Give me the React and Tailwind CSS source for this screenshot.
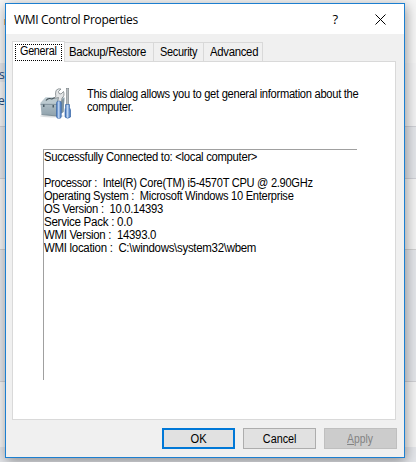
const tabBase = "h-[19px] border border-[#d9d9d9] border-l-0 border-b-0 bg-[#f0f0f0] whitespace-pre";
const narrow = "origin-left tracking-[-0.3px]";

function Toolbox() {
  return (
    <svg className="block h-[32px] w-[32px]" viewBox="0 0 32 32">
      <defs>
        <linearGradient id="box" x1="0" y1="0" x2="0" y2="1">
          <stop offset="0" stopColor="#c3d0d6" />
          <stop offset=".5" stopColor="#a5b5be" />
          <stop offset="1" stopColor="#8fa2ac" />
        </linearGradient>
        <linearGradient id="grip" x1="0" y1="0" x2="1" y2="0">
          <stop offset="0" stopColor="#2d62ae" />
          <stop offset=".45" stopColor="#c2d8f4" />
          <stop offset="1" stopColor="#2d62ae" />
        </linearGradient>
      </defs>
      <ellipse cx="12" cy="28" rx="12" ry="1.500" fill="#c9cfd2" opacity=".7" />
      <path d="M0.500 15L5.500 9.500H24.500L23.500 24L17 28L1.500 26.500Z" fill="url(#box)" />
      <path d="M0.500 15L5.500 9.500H24.500L18 15.500Z" fill="#bccad0" />
      <path d="M18 15.500L24.500 9.500L23.500 24L17 28Z" fill="#8295a0" />
      <path d="M0.500 16.500H17.500" stroke="#7c8e98" strokeWidth=".8" />
      <path d="M1.500 26.500L17 28" stroke="#73858f" strokeWidth=".8" />
      <path d="M6 12.500Q8 9.500 12 11L15 9.500" fill="none" stroke="#3e4b52" strokeWidth="1.100" />
      <rect x="3" y="16.500" width="1.500" height="2.500" fill="#4b5c66" />
      <rect x="12.500" y="17" width="1.500" height="2.500" fill="#4b5c66" />
      <path d="M16 2.500Q18 0 21 1L18.500 3.500L19 5.500L21 6L23.500 3.500Q25 8 22 10L21.500 14H17.500L18.500 9.500L14 10.500Q17 8 15.500 6Z" fill="#e3e5e6" stroke="#7c8488" strokeWidth=".8" />
      <rect x="16.500" y="13" width="4.800" height="17.500" rx="2" fill="url(#grip)" stroke="#3a69a8" strokeWidth=".5" />
      <rect x="26.500" y="0.500" width="2.200" height="17" fill="#b7bcbf" stroke="#7a8286" strokeWidth=".6" />
      <path d="M25.500 16.500H29.500V19.500L30.500 22V29Q27.500 31.500 25 29V22L25.500 19.500Z" fill="url(#grip)" stroke="#2d5ea3" strokeWidth=".6" />
    </svg>
  );
}

export default function App() {
  return (
    <div className="relative h-[462px] w-[416px] overflow-hidden bg-[#efefef] font-['Liberation_Sans',Arial,sans-serif] text-[12px] leading-[13px] text-black">
      <div className="flex h-full flex-col">
        <div className="h-[63px] bg-[#f6f6f6] pt-[19px]">
          <div className="ml-1 h-[6px] w-px bg-[#e5b270]" />
        </div>
        <div className="h-[63px] bg-[#f3f3f4] font-['Open_Sans',sans-serif] text-[12px] text-[#1f4a7c]">
          <div className="h-[19px] w-[5px] bg-[#e4e6ea] pt-[5px]"><span className="-ml-px">s</span></div>
          <div className="pt-[12px]"><span className="-ml-[2px]">ea</span></div>
        </div>
        <div className="h-[52px] border-t border-[#cfd0d6] bg-[#e4e6ea]" />
        <div className="h-[71px] border-t border-[#cfd0d6] bg-[#f4f4f4]" />
        <div className="h-[132px] border-t border-[#d0d0d0] bg-[#e4e6ea]" />
        <div className="h-[66px] border-t border-[#d0d0d4] bg-[#f4f4f4]" />
        <div className="flex-1 bg-[#e4e6ea]" />
      </div>
      <div className="absolute left-[5px] top-[3px] flex h-[455px] w-[400px] flex-col border border-[#1c7fd0] bg-[#f0f0f0] shadow-[1px_3px_12px_rgba(0,0,0,0.4)]">
        <header className="flex h-[30px] items-center bg-white pl-2 pr-[18px]">
          <h1 className="flex-1 font-['Open_Sans',sans-serif] text-[12px] tracking-[-0.33px]">WMI Control Properties</h1>
          <span className="mr-[37px] font-['Open_Sans',sans-serif] text-[13px]">?</span>
          <svg className="h-[11px] w-[11px]" viewBox="0 0 11 11" stroke="#000"><path d="M.5 .5L10.500 10.500M10.500 .5L.5 10.500" /></svg>
        </header>
        <div className="flex h-[27px] items-end pl-[6px]">
          <div className="z-10 -mb-px h-[21px] w-[53px] border border-b-0 border-[#d9d9d9] bg-white p-[2px]">
            <div className="h-[17px] border border-dotted border-black pl-1"><div className={`${narrow} scale-x-[0.9]`}>General</div></div>
          </div>
          <div className={`${tabBase} w-[89px] pl-1 pt-[3px]`}><div className={`${narrow} scale-x-[0.95]`}>Backup/Restore</div></div>
          <div className={`${tabBase} w-[50px] pl-[6px] pt-[3px]`}><div className={`${narrow} scale-x-[0.91]`}>Security</div></div>
          <div className={`${tabBase} w-[59px] pl-[6px] pt-[3px]`}><div className={`${narrow} scale-x-[0.945]`}>Advanced</div></div>
        </div>
        <main className="ml-[6px] h-[359px] w-[384px] border border-[#d9d9d9] bg-white">
          <div className="flex pl-[27px] pt-[26px]">
            <Toolbox />
            <p className={`${narrow} ml-[15px] scale-x-[0.928] whitespace-pre`}>{"This dialog allows you to get general information about the\ncomputer."}</p>
          </div>
          <div className="ml-[30px] mt-[29px] h-[231px] w-[314px] whitespace-pre border-l border-t border-[#a0a0a0] pt-px">
            <div className={`${narrow} scale-x-[0.938]`}>{"Successfully Connected to: <local computer>"}</div>
            <div className={`${narrow} mt-[13px] scale-x-[0.924]`}>Processor :  Intel(R) Core(TM) i5-4570T CPU @ 2.90GHz</div>
            <div className={`${narrow} scale-x-[0.926]`}>Operating System :  Microsoft Windows 10 Enterprise</div>
            <div className={`${narrow} scale-x-[0.937]`}>OS Version :  10.0.14393</div>
            <div className={`${narrow} scale-x-[0.967]`}>Service Pack : 0.0</div>
            <div className={`${narrow} scale-x-[0.949]`}>WMI Version :  14393.0</div>
            <div className={`${narrow} scale-x-[0.955]`}>{"WMI location :  C:\\windows\\system32\\wbem"}</div>
          </div>
        </main>
        <footer className="flex gap-2 pl-[156px] pt-2">
          <button className="h-[21px] w-[73px] border-2 border-[#0078d7] bg-[#e1e1e1] pt-px"><span className="inline-block scale-x-[0.93]">OK</span></button>
          <button className="h-[21px] w-[73px] border border-[#adadad] bg-[#e1e1e1] pt-px"><span className="inline-block scale-x-[0.9]">Cancel</span></button>
          <button className="h-[21px] w-[73px] border border-[#bfbfbf] bg-[#cccccc] pt-px text-[#838383]"><span className="inline-block scale-x-[0.86]"><u>A</u>pply</span></button>
        </footer>
      </div>
    </div>
  );
}
